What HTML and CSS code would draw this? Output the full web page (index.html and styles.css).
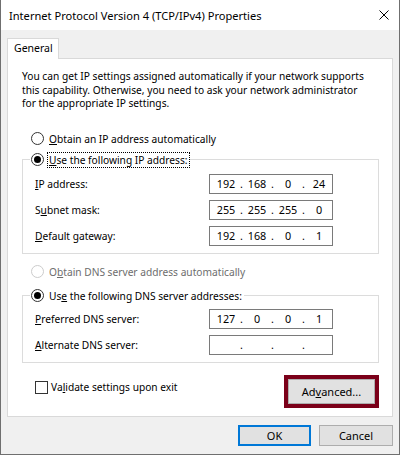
FILE: index.html
```html
<!DOCTYPE html>
<html lang="en">
<head>
    <meta charset="UTF-8">
    <meta name="viewport" content="width=device-width, initial-scale=1.0">
    <title>Internet Protocol Version 4 (TCP/IPv4) Properties</title>
    <link rel="stylesheet" href="styles.css">
</head>
<body>
    <div class="window">
        <div class="titlebar">
            <span class="title">Internet Protocol Version 4 (TCP/IPv4) Properties</span>
            <svg class="close" width="10" height="10" viewBox="0 0 10 10">
                <path d="M0.5 0.5L9.5 9.5M9.5 0.5L0.5 9.5" stroke="#000" stroke-width="1" fill="none"/>
            </svg>
        </div>
        <div class="content">
            <div class="tabs">
                <div class="tab">General</div>
            </div>
            <div class="panel">
                <p class="intro">You can get IP settings assigned automatically if your network supports<br>this capability. Otherwise, you need to ask your network administrator<br>for the appropriate IP settings.</p>

                <div class="option first"><span class="radio"></span><span class="label"><u>O</u>btain an IP address automatically</span></div>

                <fieldset class="group">
                    <legend class="option"><span class="radio checked"></span><span class="label focus"><u>U</u>se the following IP address:</span></legend>
                    <div class="field">
                        <span><u>I</u>P address:</span>
                        <div class="ip"><span class="seg">192</span><span class="dot">.</span><span class="seg">168</span><span class="dot">.</span><span class="seg">0</span><span class="dot">.</span><span class="seg">24</span></div>
                    </div>
                    <div class="field">
                        <span>S<u>u</u>bnet mask:</span>
                        <div class="ip"><span class="seg">255</span><span class="dot">.</span><span class="seg">255</span><span class="dot">.</span><span class="seg">255</span><span class="dot">.</span><span class="seg">0</span></div>
                    </div>
                    <div class="field">
                        <span><u>D</u>efault gateway:</span>
                        <div class="ip"><span class="seg">192</span><span class="dot">.</span><span class="seg">168</span><span class="dot">.</span><span class="seg">0</span><span class="dot">.</span><span class="seg">1</span></div>
                    </div>
                </fieldset>

                <div class="option disabled"><span class="radio"></span><span class="label">O<u>b</u>tain DNS server address automatically</span></div>

                <fieldset class="group dns">
                    <legend class="option"><span class="radio checked"></span><span class="label">Us<u>e</u> the following DNS server addresses:</span></legend>
                    <div class="field">
                        <span><u>P</u>referred DNS server:</span>
                        <div class="ip"><span class="seg">127</span><span class="dot">.</span><span class="seg">0</span><span class="dot">.</span><span class="seg">0</span><span class="dot">.</span><span class="seg">1</span></div>
                    </div>
                    <div class="field">
                        <span><u>A</u>lternate DNS server:</span>
                        <div class="ip"><span class="seg"></span><span class="dot">.</span><span class="seg"></span><span class="dot">.</span><span class="seg"></span><span class="dot">.</span><span class="seg"></span></div>
                    </div>
                </fieldset>

                <div class="bottom-row">
                    <div class="check"><span class="box"></span><span>Va<u>l</u>idate settings upon exit</span></div>
                    <div class="highlight"><button class="btn advanced">Ad<u>v</u>anced...</button></div>
                </div>
            </div>
            <div class="footer">
                <button class="btn ok">OK</button>
                <button class="btn cancel">Cancel</button>
            </div>
        </div>
    </div>
</body>
</html>
```

FILE: styles.css
```css
body {
    margin: 0;
    padding: 0;
    background-color: #f0f0f0;
    font-family: "Noto Sans", sans-serif;
    font-size: 10.2px;
    color: #000;
}
.window {
    width: 400px;
    height: 455px;
    box-sizing: border-box;
    border: 1px solid #6f6f6f;
    border-top: none;
    background-color: #f0f0f0;
}
.titlebar {
    height: 30px;
    background-color: #fff;
    display: flex;
    align-items: center;
    justify-content: space-between;
    padding: 0 10px 0 8px;
}
.title {
    font-size: 11.1px;
}
.close {
    display: block;
}
.content {
    padding: 8px 6px 0 6px;
}
.tabs {
    display: flex;
    height: 20px;
}
.tab {
    width: 52px;
    height: 21px;
    box-sizing: border-box;
    border: 1px solid #d9d9d9;
    border-bottom: none;
    background-color: #fff;
    padding-left: 6px;
    line-height: 19px;
    font-size: 10.5px;
    position: relative;
    z-index: 1;
}
.panel {
    border: 1px solid #d9d9d9;
    background-color: #fff;
    padding: 11px 11px 8px 14px;
}
.intro {
    margin: 0;
    line-height: 13.5px;
    white-space: nowrap;
}
.option {
    display: flex;
    align-items: center;
    height: 16px;
    white-space: nowrap;
}
.option.first {
    margin-top: 20px;
    padding-left: 9px;
}
.radio {
    width: 13px;
    height: 13px;
    box-sizing: border-box;
    border: 1px solid #333;
    border-radius: 50%;
    background-color: #fff;
    margin-right: 3px;
    position: relative;
    flex: none;
}
.radio.checked::after {
    content: "";
    position: absolute;
    left: 2px;
    top: 2px;
    width: 7px;
    height: 7px;
    border-radius: 50%;
    background-color: #000;
}
.label {
    padding: 0 1px;
    line-height: 14px;
    border: 1px solid transparent;
}
.focus {
    border: 1px dotted #000;
}
.disabled {
    color: #6d6d6d;
    margin-top: 10px;
    padding-left: 9px;
}
.disabled .radio {
    border-color: #ccc;
}
.group {
    margin: 5px 0 0 0;
    padding: 0 12px 7px 12px;
    border: 1px solid #dcdcdc;
    width: 357px;
    box-sizing: border-box;
}
.group.dns {
    margin-top: 8px;
}
.group legend {
    padding: 0 0 0 1px;
    margin-left: -5px;
}
.field {
    display: grid;
    grid-template-columns: 174px 124px;
    align-items: center;
    margin-top: 6px;
}
.dns .field:first-of-type {
    margin-top: 5px;
}
.ip {
    height: 20px;
    box-sizing: border-box;
    border: 1px solid #7a7a7a;
    display: flex;
    align-items: center;
    padding-left: 3px;
    font-size: 10.8px;
}
.seg {
    width: 26px;
    text-align: center;
}
.dot {
    width: 5px;
    text-align: center;
}
.bottom-row {
    display: flex;
    justify-content: space-between;
    margin-top: 12px;
    padding-right: 2px;
}
.check {
    display: flex;
    align-items: center;
    margin-top: 6px;
    margin-left: 13px;
    height: 13px;
}
.box {
    width: 13px;
    height: 13px;
    box-sizing: border-box;
    border: 1px solid #333;
    background-color: #fff;
    margin-right: 3px;
}
.highlight {
    border: 4px solid #7b0019;
}
.btn {
    display: block;
    font-family: inherit;
    font-size: 11px;
    color: #000;
    background-color: #e1e1e1;
    border: 1px solid #adadad;
    padding: 0;
    margin: 0;
}
.advanced {
    width: 87px;
    height: 25px;
}
.footer {
    display: flex;
    justify-content: flex-end;
    gap: 8px;
    margin-top: 8px;
}
.ok {
    width: 73px;
    height: 21px;
    border: 2px solid #0078d7;
}
.cancel {
    width: 74px;
    height: 21px;
}
```
